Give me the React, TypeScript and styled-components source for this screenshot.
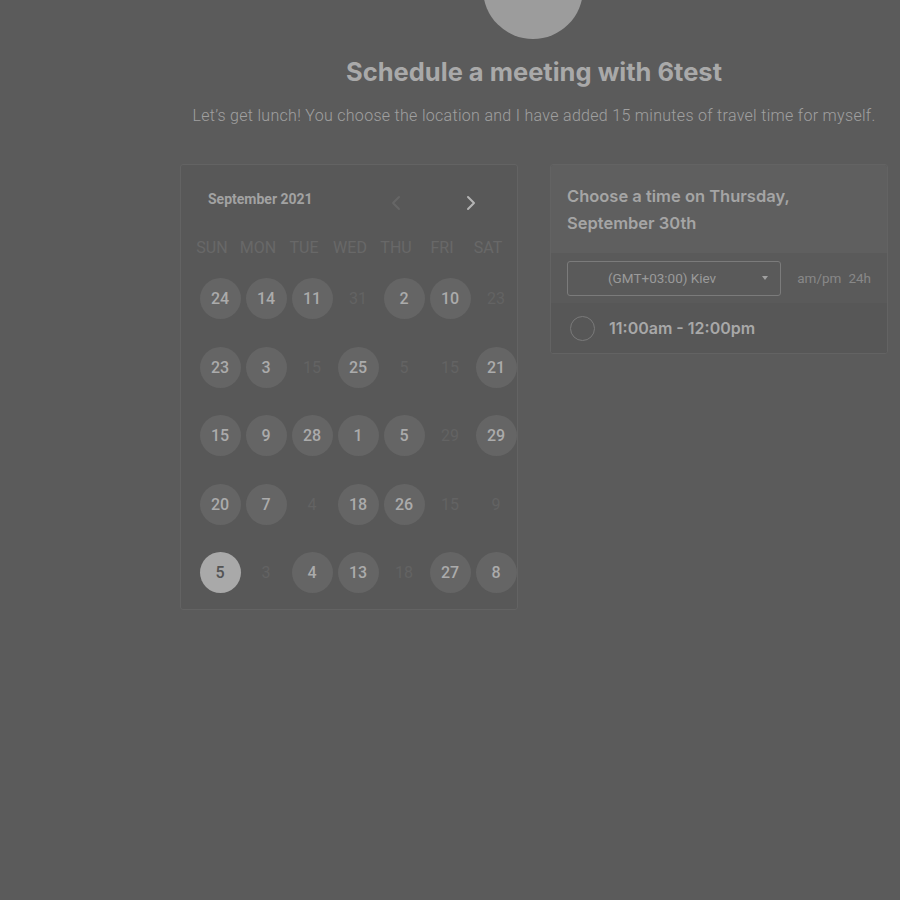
import React, { FC } from 'react';
import styled, { createGlobalStyle } from 'styled-components';

const GlobalStyle = createGlobalStyle`
  html, body {
    margin: 0;
    padding: 0;
    background: #5b5b5b;
    font-family: Roboto, 'Liberation Sans', sans-serif;
    overflow: hidden;
  }
`;

const Page = styled.div`
  width: 708px;
  margin-left: 180px;
  display: flex;
  flex-direction: column;
  align-items: center;
  height: 900px;
`;

const Avatar = styled.div`
  width: 100px;
  height: 100px;
  border-radius: 50%;
  background: #9c9c9c;
  margin-top: -61px;
  margin-left: -2px;
  display: flex;
  align-items: center;
  justify-content: center;
  color: #4a4a4a;
  font-family: Inter, sans-serif;
  font-weight: 800;
  font-size: 30px;
  line-height: 1;
`;

const Title = styled.h1`
  margin: 18px 0 0;
  font-family: Inter, 'Liberation Sans', sans-serif;
  font-weight: 700;
  font-size: 25.5px;
  line-height: 29px;
  color: #a9a9a9;
`;

const Subtitle = styled.p`
  margin: 20px 0 0;
  font-size: 16px;
  font-weight: 300;
  letter-spacing: 0.3px;
  line-height: 20px;
  color: #a0a0a0;
`;

const Panels = styled.div`
  margin-top: 38px;
  width: 100%;
  display: flex;
  gap: 32px;
  align-items: flex-start;
`;

const Panel = styled.div`
  width: 338px;
  box-sizing: border-box;
  border: 1px solid #636363;
  border-radius: 3px;
  background: #585858;
  overflow: hidden;
`;

const CalHeader = styled.div`
  display: flex;
  align-items: center;
  height: 68px;
  padding: 0 0 0 27px;
`;

const MonthLabel = styled.div`
  flex-shrink: 0;
  font-size: 14px;
  font-weight: 700;
  color: #a2a2a2;
  width: 183px;
`;

const NavButton = styled.div<{ $faded?: boolean }>`
  flex-shrink: 0;
  width: ${(p) => (p.$faded ? '75px' : 'auto')};
  display: flex;
  justify-content: flex-start;
  color: ${(p) => (p.$faded ? '#666' : '#b4b4b4')};
  padding-top: 8px;
`;

const WeekRow = styled.div`
  display: grid;
  grid-template-columns: repeat(7, 46px);
  padding-left: 8px;
  margin-top: 5px;
`;

const WeekDay = styled.div`
  text-align: center;
  font-size: 16px;
  color: #686868;
  line-height: 20px;
`;

const DayGrid = styled.div`
  display: grid;
  grid-template-columns: repeat(7, 46px);
  grid-auto-rows: 41px;
  row-gap: 27.5px;
  padding: 0 0 16px 16px;
  margin-top: 20px;
`;

const DayCell = styled.div`
  display: flex;
  align-items: flex-start;
  justify-content: center;
`;

const Day = styled.div<{ $state: 'on' | 'off' | 'sel' }>`
  width: 41px;
  height: 41px;
  border-radius: 50%;
  display: flex;
  align-items: center;
  justify-content: center;
  font-size: 16px;
  font-weight: ${(p) => (p.$state === 'off' ? 400 : 500)};
  background: ${(p) => (p.$state === 'on' ? '#656565' : p.$state === 'sel' ? '#a9a9a9' : 'transparent')};
  color: ${(p) => (p.$state === 'on' ? '#ababab' : p.$state === 'sel' ? '#545454' : '#636363')};
`;

const TimeHeader = styled.div`
  background: #5f5f5f;
  padding: 18px 16px 16px;
  font-family: Inter, 'Liberation Sans', sans-serif;
  font-weight: 600;
  font-size: 16.5px;
  line-height: 27px;
  color: #a5a5a5;
`;

const ZoneRow = styled.div`
  display: flex;
  align-items: center;
  height: 50px;
  padding: 0 16px;
  background: #5a5a5a;
`;

const ZoneSelect = styled.div`
  box-sizing: border-box;
  width: 216px;
  height: 35px;
  border: 1px solid #7b7b7b;
  border-radius: 3px;
  display: flex;
  align-items: center;
  padding: 0 12px 0 40px;
  font-size: 13.5px;
  color: #9a9a9a;
`;

const ZoneText = styled.span`
  flex: 1;
`;

const Caret = styled.span`
  width: 0;
  height: 0;
  border-left: 3.5px solid transparent;
  border-right: 3.5px solid transparent;
  border-top: 4px solid #a0a0a0;
`;

const Formats = styled.div`
  margin-left: 16px;
  font-size: 13.5px;
  color: #888;
  display: flex;
  gap: 7px;
`;

const SlotRow = styled.div`
  display: flex;
  align-items: center;
  height: 50px;
  padding: 0 20px 0 19px;
  background: #575757;
`;

const Radio = styled.div`
  width: 25px;
  height: 25px;
  border-radius: 50%;
  border: 1.5px solid #7a7a7a;
  box-sizing: border-box;
  margin-right: 14px;
`;

const SlotText = styled.div`
  font-family: Inter, 'Liberation Sans', sans-serif;
  font-weight: 600;
  font-size: 16px;
  color: #a8a8a8;
`;

type Cell = [number, 'on' | 'off' | 'sel'];

const weeks: Cell[][] = [
  [[24, 'on'], [14, 'on'], [11, 'on'], [31, 'off'], [2, 'on'], [10, 'on'], [23, 'off']],
  [[23, 'on'], [3, 'on'], [15, 'off'], [25, 'on'], [5, 'off'], [15, 'off'], [21, 'on']],
  [[15, 'on'], [9, 'on'], [28, 'on'], [1, 'on'], [5, 'on'], [29, 'off'], [29, 'on']],
  [[20, 'on'], [7, 'on'], [4, 'off'], [18, 'on'], [26, 'on'], [15, 'off'], [9, 'off']],
  [[5, 'sel'], [3, 'off'], [4, 'on'], [13, 'on'], [18, 'off'], [27, 'on'], [8, 'on']],
];

const dayNames = ['SUN', 'MON', 'TUE', 'WED', 'THU', 'FRI', 'SAT'];

const Chevron: FC<{ dir: 'left' | 'right' }> = ({ dir }) => (
  <svg width="10" height="16" viewBox="0 0 10 16" fill="none">
    <path
      d={dir === 'left' ? 'M8 2 L2 8 L8 14' : 'M2 2 L8 8 L2 14'}
      stroke="currentColor"
      strokeWidth="2"
      strokeLinecap="round"
      strokeLinejoin="round"
    />
  </svg>
);

const App: FC = () => (
  <>
    <GlobalStyle />
    <Page>
      <Avatar>6.</Avatar>
      <Title>Schedule a meeting with 6test</Title>
      <Subtitle>Let’s get lunch! You choose the location and I have added 15 minutes of travel time for myself.</Subtitle>
      <Panels>
        <Panel>
          <CalHeader>
            <MonthLabel>September 2021</MonthLabel>
            <NavButton $faded><Chevron dir="left" /></NavButton>
            <NavButton><Chevron dir="right" /></NavButton>
          </CalHeader>
          <WeekRow>
            {dayNames.map((d) => <WeekDay key={d}>{d}</WeekDay>)}
          </WeekRow>
          <DayGrid>
            {weeks.map((w, i) =>
              w.map(([n, s], j) => (
                <DayCell key={`${i}-${j}`}>
                  <Day $state={s}>{n}</Day>
                </DayCell>
              ))
            )}
          </DayGrid>
        </Panel>
        <Panel>
          <TimeHeader>
            Choose a time on Thursday,
            <br />
            September 30th
          </TimeHeader>
          <ZoneRow>
            <ZoneSelect>
              <ZoneText>(GMT+03:00) Kiev</ZoneText>
              <Caret />
            </ZoneSelect>
            <Formats>
              <span>am/pm</span>
              <span>24h</span>
            </Formats>
          </ZoneRow>
          <SlotRow>
            <Radio />
            <SlotText>11:00am - 12:00pm</SlotText>
          </SlotRow>
        </Panel>
      </Panels>
    </Page>
  </>
);

export default App;
